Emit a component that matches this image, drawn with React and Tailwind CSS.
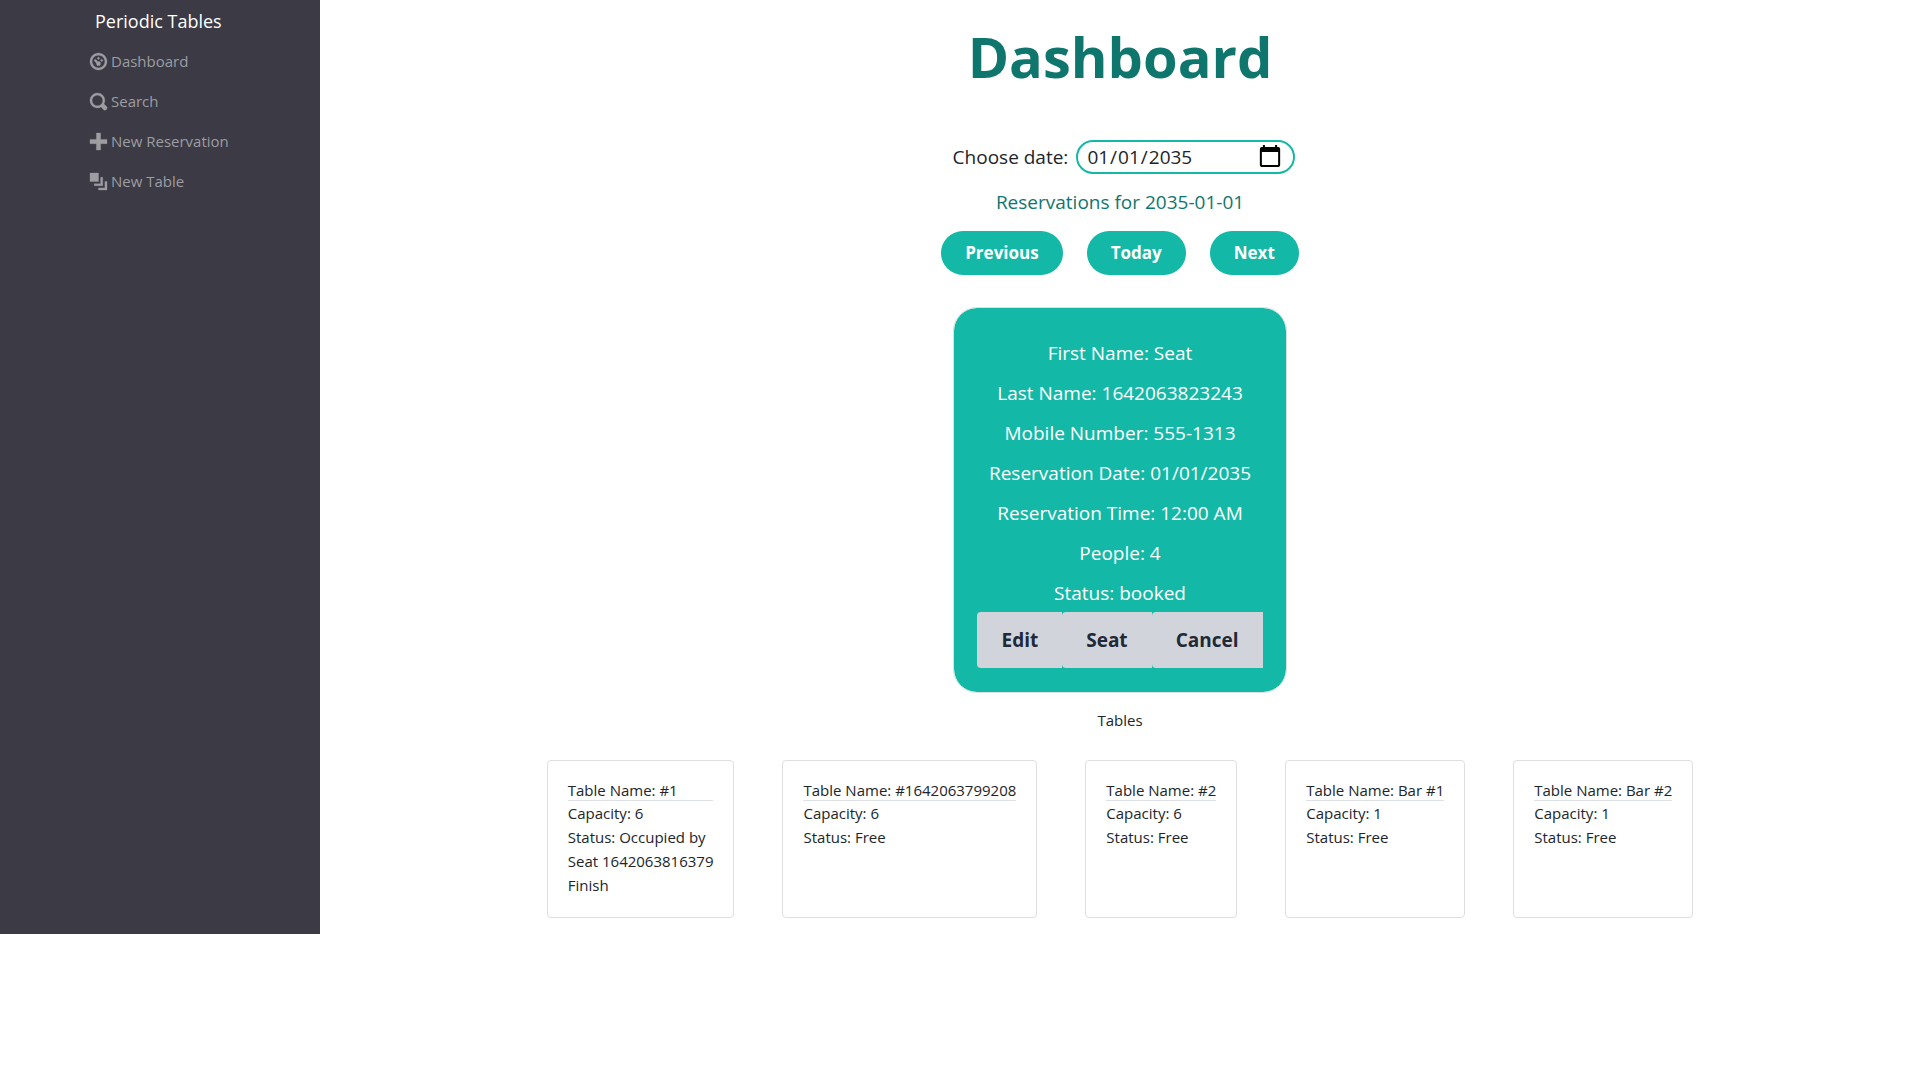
const ICONS = {
  dashboard:
    "M4 0c-2.2 0-4 1.8-4 4s1.8 4 4 4 4-1.8 4-4-1.8-4-4-4zm0 1c1.66 0 3 1.34 3 3s-1.34 3-3 3-3-1.34-3-3 1.34-3 3-3zm0 1c-.28 0-.5.22-.5.5s.22.5.5.5.5-.22.5-.5-.22-.5-.5-.5zm-1.66 1a.5.5 0 0 0-.19.84l.91.91c-.02.08-.06.16-.06.25 0 .55.45 1 1 1s1-.45 1-1-.45-1-1-1c-.09 0-.17.04-.25.06l-.91-.91a.5.5 0 0 0-.44-.16.5.5 0 0 0-.06 0zm3.16 0c-.28 0-.5.22-.5.5s.22.5.5.5.5-.22.5-.5-.22-.5-.5-.5z",
  search:
    "M3.5 0c-1.93 0-3.5 1.57-3.5 3.5s1.57 3.5 3.5 3.5c.59 0 1.17-.14 1.66-.41a1 1 0 0 0 .13.13l1 1a1.02 1.02 0 1 0 1.44-1.44l-1-1a1 1 0 0 0-.16-.13c.27-.49.44-1.06.44-1.66 0-1.93-1.55-3.5-3.5-3.5zm0 1c1.39 0 2.5 1.11 2.5 2.5 0 .66-.24 1.27-.66 1.72-.01.01-.02.02-.03.03a1 1 0 0 0-.13.13c-.44.4-1.04.63-1.69.63-1.39 0-2.5-1.11-2.5-2.5s1.11-2.5 2.5-2.5z",
  plus: "M3 0v3h-3v2h3v3h2v-3h3v-2h-3v-3h-2z",
  layers: "M0 0v4h4v-4h-4zm5 2v3h-3v1h4v-4h-1zm2 2v3h-3v1h4v-4h-1z",
};

const NAV = [
  { icon: "dashboard", label: "Dashboard" },
  { icon: "search", label: "Search" },
  { icon: "plus", label: "New Reservation" },
  { icon: "layers", label: "New Table" },
];

const RESERVATION = [
  "First Name: Seat",
  "Last Name: 1642063823243",
  "Mobile Number: 555-1313",
  "Reservation Date: 01/01/2035",
  "Reservation Time: 12:00 AM",
  "People: 4",
  "Status: booked",
];

const TABLES = [
  { name: "#1", capacity: 6, status: "Occupied by", guest: "Seat 1642063816379" },
  { name: "#1642063799208", capacity: 6, status: "Free" },
  { name: "#2", capacity: 6, status: "Free" },
  { name: "Bar #1", capacity: 1, status: "Free" },
  { name: "Bar #2", capacity: 1, status: "Free" },
];

function Sidebar() {
  return (
    <nav className="w-1/6 bg-[#3b3a45] pt-px pl-[90px]">
      <a href="#home" className="flex h-10 items-center pl-[5px] text-lg text-white">
        Periodic Tables
      </a>
      <ul>
        {NAV.map(({ icon, label }) => (
          <li key={label}>
            <a href="#nav" className="flex h-10 items-center gap-1 text-[15px] text-[#9d9da2]">
              <svg
                viewBox="0 0 8 8"
                className="size-[17px] overflow-visible fill-current stroke-current stroke-[0.15]"
                aria-hidden="true"
              >
                <path d={ICONS[icon]} />
              </svg>
              {label}
            </a>
          </li>
        ))}
      </ul>
    </nav>
  );
}

function PillButton({ children }) {
  return (
    <button type="button" className="h-11 rounded-full bg-[#14b8a6] px-6 text-[17px] font-bold text-white">
      {children}
    </button>
  );
}

function ReservationCard() {
  return (
    <section className="mt-8 rounded-3xl border border-[#d5e3e1] bg-[#14b8a6] bg-clip-padding px-[23px] py-6 text-center text-[19px] text-white">
      {RESERVATION.map((line) => (
        <p key={line} className="h-10 leading-[42px]">
          {line}
        </p>
      ))}
      <div className="flex">
        {["Edit", "Seat", "Cancel"].map((action) => (
          <button
            key={action}
            type="button"
            className="h-14 grow rounded-l bg-[#d1d5db] px-6 text-[19px] font-bold text-[#1f2937]"
          >
            {action}
          </button>
        ))}
      </div>
    </section>
  );
}

function TableCard({ name, capacity, status, guest }) {
  return (
    <article className="rounded border border-[#dfdfdf] p-5">
      <h3 className="border-b border-[#dee2e6] leading-[19px]">Table Name: {name}</h3>
      <p>Capacity: {capacity}</p>
      <p>Status: {status}</p>
      {guest && <p>{guest}</p>}
      {guest && (
        <button type="button" className="block">
          Finish
        </button>
      )}
    </article>
  );
}

export default function App() {
  return (
    <div className="min-h-screen bg-white font-['Open_Sans',sans-serif] text-[15px] leading-6 text-[#212529]">
      <div className="flex">
        <Sidebar />
        <main className="flex flex-1 flex-col items-center pb-4">
          <h1 className="mt-[26px] text-[56px] leading-[60px] font-bold text-[#0f766e]">Dashboard</h1>
          <div className="mt-[54px] flex items-center gap-2 pl-2 text-[19px]">
            <label htmlFor="date">Choose date:</label>
            <input
              id="date"
              type="date"
              defaultValue="2035-01-01"
              className="h-[34px] w-[219px] rounded-full border-2 border-[#14b8a6] pr-2.5 pl-2 [&::-webkit-calendar-picker-indicator]:size-[26px] [&::-webkit-calendar-picker-indicator]:p-0 [&::-webkit-calendar-picker-indicator]:bg-size-[26px]"
            />
          </div>
          <h2 className="mt-4 text-[19px] text-[#0f766e]">Reservations for 2035-01-01</h2>
          <div className="mt-[17px] flex gap-6">
            <PillButton>Previous</PillButton>
            <PillButton>Today</PillButton>
            <PillButton>Next</PillButton>
          </div>
          <ReservationCard />
          <h2 className="mt-[15px]">Tables</h2>
          <div className="mt-7 flex gap-12">
            {TABLES.map((table) => (
              <TableCard key={table.name} {...table} />
            ))}
          </div>
        </main>
      </div>
    </div>
  );
}
